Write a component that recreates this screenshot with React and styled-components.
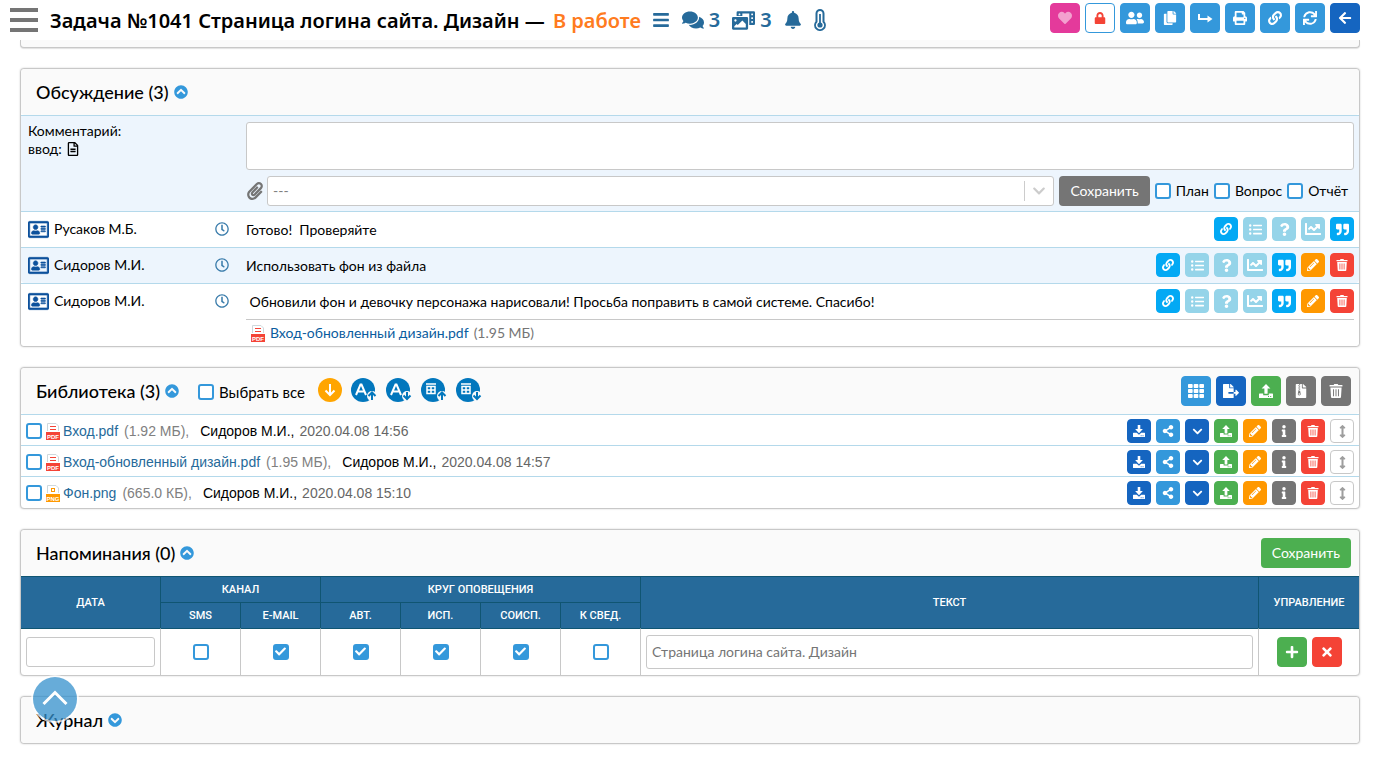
import React, { useState } from 'react';
import styled, { createGlobalStyle } from 'styled-components';
import {
    FaArrowLeft, FaBars, FaBell, FaChartLine, FaCheck, FaChevronCircleDown, FaChevronCircleUp, FaChevronDown,
    FaComments, FaCopy, FaFileArchive, FaFileExport, FaHeart, FaInfo, FaLink, FaListUl, FaLock, FaPaperclip,
    FaPencilAlt, FaPhotoVideo, FaPlus, FaPrint, FaQuestion, FaQuoteRight, FaRegAddressCard, FaRegClock,
    FaRegFileAlt, FaShareAlt, FaSync, FaTh, FaTimes, FaUserFriends, FaArrowsAltV,
} from 'react-icons/fa';

const blue = '#3498db';
const darkBlue = '#1565c0';
const steel = '#266a9a';
const cyan = '#03a9f4';
const paleCyan = '#95d4e9';
const green = '#4caf50';
const orange = '#ff9800';
const red = '#f44336';
const gray = '#757575';
const line = '#b4d9eb';
const border = '#c8c8c8';

const TurnRightIcon = () => (
    <svg width="16" height="16" viewBox="0 0 16 16" fill="none" stroke="currentColor" strokeWidth="2">
        <path d="M2 4v5h9" />
        <path d="M10.5 5.5v7L15.5 9z" fill="currentColor" stroke="none" />
    </svg>
);

const UploadIcon = ({ size = 14 }) => (
    <svg width={size} height={size} viewBox="0 0 14 14" fill="currentColor">
        <path d="M7 0l4.4 4.6H8.6v5.2H5.4V4.6H2.6z" />
        <path fillRule="evenodd" d="M.6 9.4h3.6v1.8h5.6V9.4h3.6a.6.6 0 0 1 .6.6v3.4a.6.6 0 0 1-.6.6H.6a.6.6 0 0 1-.6-.6V10a.6.6 0 0 1 .6-.6zM9 12v1h1v-1zm2.200 0v1h1v-1z" />
    </svg>
);

const DownloadIcon = () => (
    <svg width="12" height="12" viewBox="0 0 14 14" fill="currentColor">
        <path d="M5.500 0h3v4.600h3L7 9.500 2.500 4.600h3z" />
        <path fillRule="evenodd" d="M.6 9h3.800L7 11.400 9.600 9h3.800a.6.6 0 0 1 .6.6v3.800a.6.6 0 0 1-.6.6H.6a.6.6 0 0 1-.6-.6V9.600A.6.6 0 0 1 .6 9zM9 12v1h1v-1zm2.200 0v1h1v-1z" />
    </svg>
);

const TrashIcon = ({ size = 12 }) => (
    <svg width={size} height={size} viewBox="0 0 12 12" fill="currentColor">
        <path d="M4.500 0h3l.5.9h3.500V2.200H.5V.9H4z" />
        <path fillRule="evenodd" d="M1.200 3h9.600l-.5 8.200a.9.9 0 0 1-.9.8H2.600a.9.9 0 0 1-.9-.8zM3.500 4.500v6h.8v-6zm2.100 0v6h.8v-6zm2.100 0v6h.8v-6z" />
    </svg>
);

const ThermometerIcon = () => (
    <svg width="12" height="22" viewBox="0 0 12 22" fill="none" stroke="currentColor">
        <path d="M2.500 4.500a3.500 3.500 0 0 1 7 0v8.200a4.900 4.900 0 1 1-7 0z" strokeWidth="2" />
        <path d="M6 5v10" strokeWidth="1.800" />
        <circle cx="6" cy="16" r="2.600" fill="currentColor" stroke="none" />
    </svg>
);

const ChevronUpIcon = () => (
    <svg width="26" height="16" viewBox="0 0 26 16" fill="none" stroke="#fff" strokeWidth="3">
        <path d="M1.500 14L13 2.500 24.500 14" />
    </svg>
);

const FileIcon = ({ type }) => {
    const color = type === 'PNG' ? orange : red;
    return (
        <svg width="14" height="17" viewBox="0 0 14 17">
            <path d="M1.500 8V.5h8.500L12.500 3v5" fill="#fff" stroke="#cfd8dc" />
            {type === 'PNG'
                ? <rect x="5.500" y="3.500" width="3" height="3" fill="none" stroke={color} />
                : <path d="M4 3.500h6M4 6.500h6" stroke={color} />}
            <rect y="9" width="14" height="8" fill={color} />
            <text x="7" y="15.500" textAnchor="middle" fontFamily="Liberation Sans, sans-serif" fontWeight="700" fontSize="6" fill="#fff">{type}</text>
        </svg>
    );
};

const SortIcon = ({ kind, up }) => (
    <svg width="26" height="24" viewBox="0 0 26 24" fill="none">
        <circle cx="12" cy="12" r="12" fill="#0277bd" />
        {kind === 'name'
            ? <path d="M5 17L9.500 6.500h1L15 17M7 13.500h6" stroke="#fff" strokeWidth="2" />
            : <path d="M5 6h10M6 8.500h8v7H6zM10 8.500v7M6 12h8" stroke="#fff" strokeWidth="1.500" />}
        <circle cx="21" cy="18" r="5" fill="#fafafa" />
        {up
            ? <path d="M21 22v-7M17.500 18L21 14.500l3.500 3.500" stroke="#0277bd" strokeWidth="2" />
            : <path d="M21 14v7M17.500 17.500L21 21l3.500-3.500" stroke="#0277bd" strokeWidth="2" />}
    </svg>
);

const DownCircleIcon = () => (
    <svg width="24" height="24" viewBox="0 0 24 24" fill="none">
        <circle cx="12" cy="12" r="12" fill="#ffa500" />
        <path d="M12 6v11M7.500 12.500L12 17l4.500-4.500" stroke="#fff" strokeWidth="2" />
    </svg>
);

/* ---------- data ---------- */

const headerButtons = [
    { title: 'Избранное', icon: <FaHeart size={14} />, bg: '#e43a9b', color: '#f3a0cf' },
    { title: 'Доступ', icon: <FaLock size={12} />, bg: '#fff', color: red, line: blue },
    { title: 'Участники', icon: <FaUserFriends size={18} />, bg: blue },
    { title: 'Копировать', icon: <FaCopy size={14} />, bg: blue },
    { title: 'Передать', icon: <TurnRightIcon />, bg: blue },
    { title: 'Печать', icon: <FaPrint size={14} />, bg: blue },
    { title: 'Ссылка', icon: <FaLink size={14} />, bg: blue },
    { title: 'Обновить', icon: <FaSync size={14} />, bg: blue },
    { title: 'Назад', icon: <FaArrowLeft size={14} />, bg: darkBlue },
];

const commentButtons = [
    { title: 'Ссылка', icon: <FaLink size={12} />, bg: cyan },
    { title: 'План', icon: <FaListUl size={13} />, bg: paleCyan },
    { title: 'Вопрос', icon: <FaQuestion size={13} />, bg: paleCyan },
    { title: 'Отчёт', icon: <FaChartLine size={16} />, bg: paleCyan },
    { title: 'Цитата', icon: <FaQuoteRight size={13} />, bg: cyan },
    { title: 'Изменить', icon: <FaPencilAlt size={12} />, bg: orange, own: true },
    { title: 'Удалить', icon: <TrashIcon />, bg: red, own: true },
];

const comments = [
    { author: 'Русаков М.Б.', text: 'Готово!  Проверяйте' },
    { author: 'Сидоров М.И.', text: 'Использовать фон из файла', own: true },
    {
        author: 'Сидоров М.И.',
        text: ' Обновили фон и девочку персонажа нарисовали! Просьба поправить в самой системе. Спасибо!',
        own: true,
        file: { name: 'Вход-обновленный дизайн.pdf', size: '(1.95 МБ)' },
    },
];

const libraryButtons = [
    { title: 'Плитка', icon: <FaTh size={16} />, bg: blue },
    { title: 'Экспорт', icon: <FaFileExport size={16} />, bg: darkBlue },
    { title: 'Загрузить', icon: <UploadIcon />, bg: green },
    { title: 'Архив', icon: <FaFileArchive size={14} />, bg: gray },
    { title: 'Удалить', icon: <TrashIcon size={14} />, bg: gray },
];

const fileButtons = [
    { title: 'Скачать', icon: <DownloadIcon />, bg: darkBlue },
    { title: 'Поделиться', icon: <FaShareAlt size={12} />, bg: blue },
    { title: 'Ещё', icon: <FaChevronDown size={11} />, bg: darkBlue },
    { title: 'Загрузить', icon: <UploadIcon size={12} />, bg: green },
    { title: 'Изменить', icon: <FaPencilAlt size={12} />, bg: orange },
    { title: 'Сведения', icon: <FaInfo size={12} />, bg: gray },
    { title: 'Удалить', icon: <TrashIcon />, bg: red },
    { title: 'Переместить', icon: <FaArrowsAltV size={13} />, bg: '#fff', color: '#9e9e9e', line: border },
];

const files = [
    { name: 'Вход.pdf', type: 'PDF', size: '(1.92 МБ),', author: 'Сидоров М.И.', date: '2020.04.08 14:56' },
    { name: 'Вход-обновленный дизайн.pdf', type: 'PDF', size: '(1.95 МБ),', author: 'Сидоров М.И.', date: '2020.04.08 14:57' },
    { name: 'Фон.png', type: 'PNG', size: '(665.0 КБ),', author: 'Сидоров М.И.', date: '2020.04.08 15:10' },
];

const channels = [
    { id: 'sms', label: 'SMS', on: false },
    { id: 'mail', label: 'E-MAIL', on: true },
    { id: 'author', label: 'АВТ.', on: true },
    { id: 'exec', label: 'ИСП.', on: true },
    { id: 'coexec', label: 'СОИСП.', on: true },
    { id: 'info', label: 'К СВЕД.', on: false },
];

/* ---------- components ---------- */

const Check = ({ defaultChecked = false, ...rest }) => {
    const [checked, setChecked] = useState(defaultChecked);
    return (
        <CheckBox>
            <input type="checkbox" checked={checked} onChange={(event) => setChecked(event.target.checked)} {...rest} />
            {checked && <FaCheck size={11} />}
        </CheckBox>
    );
};

const Buttons = ({ items, small }) => (
    <ButtonGroup>
        {items.map((item) => (
            <IconButton key={item.title} type="button" aria-label={item.title} $bg={item.bg} $color={item.color} $line={item.line} $small={small}>
                {item.icon}
            </IconButton>
        ))}
    </ButtonGroup>
);

const Comment = ({ comment, striped }) => (
    <CommentRow $striped={striped}>
        <Author>
            <FaRegAddressCard className="card" size={21} />
            {comment.author}
            <FaRegClock className="clock" size={14} />
        </Author>
        <div>
            <CommentLine>
                <CommentText>{comment.text}</CommentText>
                <Buttons small items={commentButtons.filter((item) => comment.own || !item.own)} />
            </CommentLine>
            {comment.file && (
                <Attachment>
                    <FileIcon type="PDF" />
                    <a href="#file">{comment.file.name}</a>
                    <span>{comment.file.size}</span>
                </Attachment>
            )}
        </div>
    </CommentRow>
);

export default function App() {
    return (
        <>
            <GlobalStyle />
            <Header>
                <MenuButton type="button" aria-label="Меню"><i /><i /><i /></MenuButton>
                <Title>Задача №1041 Страница логина сайта. Дизайн — <em>В работе</em></Title>
                <HeaderInfo>
                    <FaBars size={18} />
                    <span><FaComments size={22} />3</span>
                    <span><FaPhotoVideo size={23} />3</span>
                    <FaBell size={18} />
                    <ThermometerIcon />
                </HeaderInfo>
                <Buttons items={headerButtons} />
            </Header>
            <Page>
                <PreviousPanel />

                <Panel>
                    <PanelHeader>
                        <h2>Обсуждение (3)</h2>
                        <FaChevronCircleUp size={14} color={blue} />
                    </PanelHeader>
                    <CommentForm>
                        <FormLabel>
                            <label htmlFor="comment">Комментарий:</label>
                            <div>ввод: <FaRegFileAlt size={14} /></div>
                        </FormLabel>
                        <FormFields>
                            <textarea id="comment" />
                            <FormTools>
                                <Template>
                                    <FaPaperclip size={18} color={gray} />
                                    <SelectBox>
                                        <select aria-label="Шаблон"><option>---</option></select>
                                        <FaChevronDown size={14} />
                                    </SelectBox>
                                </Template>
                                <TextButton type="button" $bg={gray}>Сохранить</TextButton>
                                {['План', 'Вопрос', 'Отчёт'].map((name) => (
                                    <CheckLabel key={name}><Check />{name}</CheckLabel>
                                ))}
                            </FormTools>
                        </FormFields>
                    </CommentForm>
                    {comments.map((comment, index) => (
                        <Comment key={comment.text} comment={comment} striped={index % 2 === 1} />
                    ))}
                </Panel>

                <Panel>
                    <PanelHeader>
                        <h2>Библиотека (3)</h2>
                        <FaChevronCircleUp size={14} color={blue} />
                        <LibraryTools>
                            <CheckLabel $large><Check />Выбрать все</CheckLabel>
                            <SortButtons>
                                <button type="button" aria-label="По порядку"><DownCircleIcon /></button>
                                <button type="button" aria-label="По имени вверх"><SortIcon kind="name" up /></button>
                                <button type="button" aria-label="По имени вниз"><SortIcon kind="name" /></button>
                                <button type="button" aria-label="По дате вверх"><SortIcon kind="date" up /></button>
                                <button type="button" aria-label="По дате вниз"><SortIcon kind="date" /></button>
                            </SortButtons>
                        </LibraryTools>
                        <Buttons items={libraryButtons} />
                    </PanelHeader>
                    <FileList>
                        {files.map((file) => (
                            <FileRow key={file.name}>
                                <Check aria-label={file.name} />
                                <FileText>
                                    <FileIcon type={file.type} />
                                    <a href="#file">{file.name}</a>
                                    <span>{file.size}</span>
                                    <b>{file.author},</b>
                                    <time>{file.date}</time>
                                </FileText>
                                <Buttons small items={fileButtons} />
                            </FileRow>
                        ))}
                    </FileList>
                </Panel>

                <Panel>
                    <PanelHeader>
                        <h2>Напоминания (0)</h2>
                        <FaChevronCircleUp size={14} color={blue} />
                        <TextButton type="button" $bg={green}>Сохранить</TextButton>
                    </PanelHeader>
                    <Reminders>
                        <colgroup>
                            <col className="date" />
                            {channels.map((channel) => <col key={channel.id} className="flag" />)}
                            <col />
                            <col className="manage" />
                        </colgroup>
                        <thead>
                            <tr>
                                <th rowSpan={2}>ДАТА</th>
                                <th colSpan={2}>КАНАЛ</th>
                                <th colSpan={4}>КРУГ ОПОВЕЩЕНИЯ</th>
                                <th rowSpan={2}>ТЕКСТ</th>
                                <th rowSpan={2}>УПРАВЛЕНИЕ</th>
                            </tr>
                            <tr className="second">
                                {channels.map((channel) => <th key={channel.id}>{channel.label}</th>)}
                            </tr>
                        </thead>
                        <tbody>
                            <tr>
                                <td><DateInput type="text" aria-label="Дата" /></td>
                                {channels.map((channel) => (
                                    <td key={channel.id}><Check defaultChecked={channel.on} aria-label={channel.label} /></td>
                                ))}
                                <td><TextInput type="text" aria-label="Текст" placeholder="Страница логина сайта. Дизайн" /></td>
                                <td>
                                    <ManageButtons>
                                        <IconButton type="button" aria-label="Добавить" $bg={green}><FaPlus size={14} /></IconButton>
                                        <IconButton type="button" aria-label="Убрать" $bg={red}><FaTimes size={14} /></IconButton>
                                    </ManageButtons>
                                </td>
                            </tr>
                        </tbody>
                    </Reminders>
                </Panel>

                <Panel>
                    <PanelHeader>
                        <h2>Журнал</h2>
                        <FaChevronCircleDown size={14} color={blue} />
                    </PanelHeader>
                </Panel>
            </Page>
            <ScrollTop type="button" aria-label="Наверх"><ChevronUpIcon /></ScrollTop>
        </>
    );
}

/* ---------- styles ---------- */

const GlobalStyle = createGlobalStyle`
    * { box-sizing: border-box; }
    body {
        margin: 0;
        background: #fff;
        color: #000;
        font: 14px/18px Lato, "Noto Sans", sans-serif;
    }
    button, input, select, textarea { font: inherit; margin: 0; }
    button { cursor: pointer; }
    a { text-decoration: none; }
    svg { display: block; flex: none; }
`;

const Header = styled.header`
    display: flex;
    align-items: center;
    height: 40px;
    padding: 0 20px 4px 10px;
    background: #fff;
`;

const MenuButton = styled.button`
    display: flex;
    flex-direction: column;
    gap: 6px;
    width: 28px;
    padding: 4px 0 0;
    border: 0;
    background: none;
    i {
        height: 4px;
        background: ${gray};
    }
`;

const Title = styled.h1`
    margin: 0 0 0 12px;
    padding-top: 5px;
    font: 600 20px/28px "Noto Sans", sans-serif;
    em {
        margin-left: 3px;
        font-style: normal;
        color: #ff7b20;
    }
`;

const HeaderInfo = styled.div`
    display: flex;
    align-items: center;
    gap: 12px;
    margin-left: 11px;
    padding-top: 4px;
    color: ${steel};
    font: 600 20px/28px "Noto Sans", sans-serif;
    span {
        display: flex;
        align-items: center;
        gap: 5px;
    }
`;

const ButtonGroup = styled.div`
    display: flex;
    gap: 5px;
    margin-left: auto;
`;

const IconButton = styled.button`
    display: flex;
    align-items: center;
    justify-content: center;
    width: ${({ $small }) => ($small ? 24 : 30)}px;
    height: ${({ $small }) => ($small ? 24 : 30)}px;
    padding: 0;
    border: 1px solid ${({ $line, $bg }) => $line || $bg};
    border-radius: 4px;
    background: ${({ $bg }) => $bg};
    color: ${({ $color }) => $color || '#fff'};
`;

const TextButton = styled.button`
    height: 30px;
    padding: 0 11px;
    border: 0;
    border-radius: 4px;
    background: ${({ $bg }) => $bg};
    color: #fff;
`;

const Page = styled.main`
    display: flex;
    flex-direction: column;
    gap: 20px;
    padding: 0 20px 20px;
`;

const PreviousPanel = styled.div`
    height: 8px;
    border: 1px solid ${border};
    border-top: 0;
    border-radius: 0 0 4px 4px;
    background: #fafafa;
    box-shadow: 0 1px 1px rgba(0, 0, 0, .12);
`;

const Panel = styled.section`
    border: 1px solid ${border};
    border-radius: 4px;
    background: #fff;
    box-shadow: 0 0 2px rgba(0, 0, 0, .2);
`;

const PanelHeader = styled.div`
    display: flex;
    align-items: center;
    gap: 5px;
    height: 46px;
    padding: 0 8px 0 15px;
    border-radius: 4px;
    background: #fafafa;
    h2 {
        margin: 0;
        font-size: 18px;
        line-height: 24px;
        font-weight: 500;
    }
    > button {
        margin-left: auto;
    }
`;

const CommentForm = styled.form`
    display: grid;
    grid-template-columns: 218px 1fr;
    padding: 6px 5px 5px 7px;
    border-top: 1px solid ${line};
    background: #edf5fd;
`;

const FormLabel = styled.div`
    div {
        display: flex;
        align-items: center;
        gap: 4px;
    }
`;

const FormFields = styled.div`
    display: flex;
    flex-direction: column;
    gap: 6px;
    textarea {
        height: 48px;
        border: 1px solid ${border};
        border-radius: 3px;
        resize: none;
    }
`;

const FormTools = styled.div`
    display: flex;
    align-items: center;
    gap: 5px;
    padding-right: 6px;
`;

const Template = styled.div`
    display: flex;
    flex: 1;
    align-items: center;
    gap: 3px;
`;

const SelectBox = styled.div`
    position: relative;
    flex: 1;
    select {
        display: block;
        width: 100%;
        height: 30px;
        padding: 0 5px;
        border: 1px solid ${border};
        border-radius: 3px;
        background: #fff;
        color: #808080;
        appearance: none;
    }
    &::after {
        content: '';
        position: absolute;
        top: 5px;
        right: 29px;
        width: 1px;
        height: 20px;
        background: #ccc;
    }
    svg {
        position: absolute;
        top: 8px;
        right: 8px;
        color: #ccc;
    }
`;

const CheckLabel = styled.label`
    display: flex;
    align-items: center;
    gap: 5px;
    font-size: ${({ $large }) => ($large ? 15 : 14)}px;
    white-space: nowrap;
`;

const CheckBox = styled.span`
    display: grid;
    place-items: center;
    flex: none;
    input {
        grid-area: 1 / 1;
        width: 16px;
        height: 16px;
        border: 2px solid ${blue};
        border-radius: 3px;
        background: #fff;
        appearance: none;
    }
    input:checked {
        background: ${blue};
    }
    svg {
        z-index: 1;
        grid-area: 1 / 1;
        color: #fff;
        pointer-events: none;
    }
`;

const CommentRow = styled.div`
    display: grid;
    grid-template-columns: 218px 1fr;
    padding: 5px 5px 0 7px;
    border-top: 1px solid ${line};
    border-radius: 0 0 4px 4px;
    background: ${({ $striped }) => ($striped ? '#edf5fd' : '#fff')};
`;

const Author = styled.div`
    display: flex;
    align-items: center;
    gap: 5px;
    height: 24px;
    padding-right: 17px;
    .card {
        color: #0d519c;
        stroke-width: 16px;
    }
    .clock {
        margin-left: auto;
        color: #3a7cab;
    }
`;

const CommentLine = styled.div`
    display: flex;
    align-items: center;
    padding-bottom: 6px;
`;

const CommentText = styled.p`
    margin: 0;
    padding-top: 2px;
    white-space: pre-wrap;
`;

const Attachment = styled.div`
    display: flex;
    align-items: center;
    gap: 5px;
    height: 27px;
    padding-left: 5px;
    border-top: 1px solid ${border};
    a { color: #0a5c9e; }
    span { color: ${gray}; }
`;

const LibraryTools = styled.div`
    display: flex;
    align-items: center;
    gap: 13px;
    margin-left: 14px;
    label { padding-top: 2px; }
`;

const SortButtons = styled.div`
    display: flex;
    gap: 9px;
    margin-bottom: 2px;
    button {
        padding: 0;
        border: 0;
        background: none;
    }
`;

const FileList = styled.div`
    padding-bottom: 1px;
    font: 14px/18px "Liberation Sans", sans-serif;
`;

const FileRow = styled.div`
    display: flex;
    align-items: center;
    gap: 4px;
    padding: 4px 5px 2px;
    border-top: 1px solid ${line};
`;

const FileText = styled.div`
    display: flex;
    align-items: center;
    a {
        margin: 0 6px 0 3px;
        color: ${steel};
    }
    span {
        margin-right: 11px;
        color: gray;
    }
    b {
        margin-right: 5px;
        font-weight: 400;
    }
    time {
        color: #666;
    }
`;

const Reminders = styled.table`
    width: 100%;
    table-layout: fixed;
    border-spacing: 0;
    text-align: center;
    .date { width: 139px; }
    .flag { width: 80px; }
    .manage { width: 101px; }
    th {
        height: 26px;
        padding: 0;
        border: 0 solid #105572;
        border-width: 1px 0 0 1px;
        background: ${steel};
        color: #fff;
        font: 500 11px/14px Roboto, sans-serif;
    }
    td {
        height: 47px;
        padding: 0 5px 1px;
        border-top: 1px solid #105572;
        border-left: 1px solid ${border};
    }
    tr:not(.second) > :first-child {
        border-left: 0;
    }
`;

const TextInput = styled.input`
    display: block;
    width: 100%;
    height: 34px;
    padding: 0 5px;
    border: 1px solid ${border};
    border-radius: 3px;
    &::placeholder { color: ${gray}; }
`;

const DateInput = styled(TextInput)`
    height: 30px;
`;

const ManageButtons = styled.div`
    display: flex;
    justify-content: center;
    gap: 5px;
`;

const ScrollTop = styled.button`
    position: fixed;
    left: 33px;
    bottom: 43px;
    display: flex;
    align-items: center;
    justify-content: center;
    width: 44px;
    height: 44px;
    padding: 0 0 2px;
    border: 0;
    border-radius: 50%;
    background: rgba(52, 144, 204, .75);
    box-shadow: 0 0 0 2px rgba(255, 255, 255, .7);
`;
